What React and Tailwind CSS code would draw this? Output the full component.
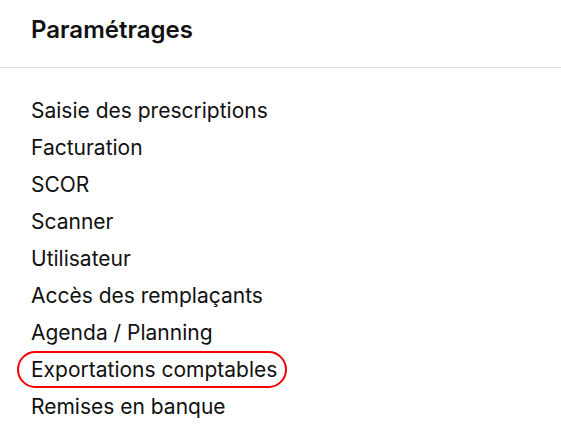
import React from "react";

const items = [
  "Saisie des prescriptions",
  "Facturation",
  "SCOR",
  "Scanner",
  "Utilisateur",
  "Accès des remplaçants",
  "Agenda / Planning",
  "Exportations comptables",
  "Remises en banque",
];

export default function App() {
  return (
    <div className="w-[561px] h-[447px] bg-white font-['Inter',sans-serif] text-[#111111]">
      {/* Header */}
      <div className="h-[68px] border-b border-[#dde1ea] px-[31px] pt-[13px]">
        <h1 className="text-[24px] font-semibold leading-[34px]">Paramétrages</h1>
      </div>

      {/* Menu */}
      <ul className="pt-[24px] pl-[31px]">
        {items.map((item) => (
          <li key={item} className="h-[37px] flex items-center text-[21px]">
            {item === "Exportations comptables" ? (
              <span className="relative">
                {item}
                <span className="absolute -left-[14px] -right-[10px] -top-[3px] -bottom-[3px] rounded-full border-[2.5px] border-[#f00000]" />
              </span>
            ) : (
              item
            )}
          </li>
        ))}
      </ul>
    </div>
  );
}
